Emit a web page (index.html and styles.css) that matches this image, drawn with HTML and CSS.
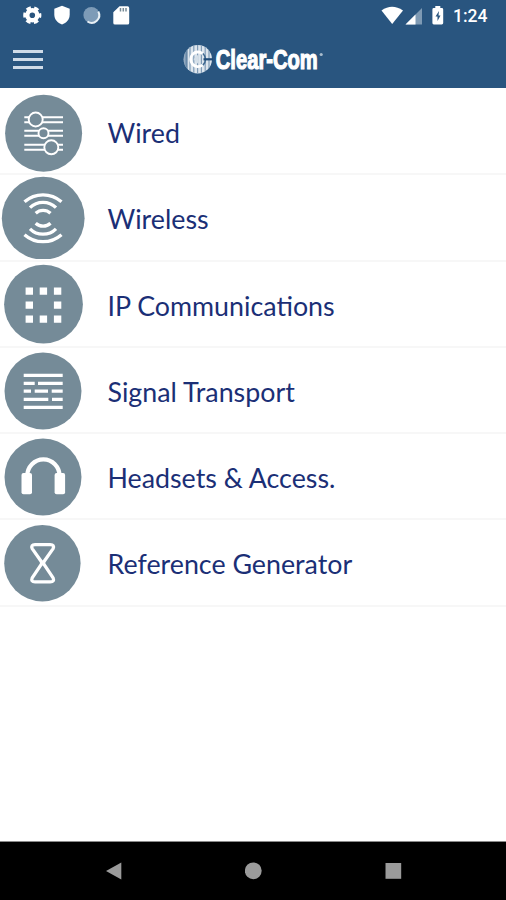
FILE: index.html
```html
<!DOCTYPE html>
<html lang="en" dir="ltr">
<head>
  <title>Clear-Com</title>
  <meta charset="utf-8">
  <link rel="stylesheet" href="styles.css">
</head>
<body>
  <header class="top">
    <div class="status">
      <svg class="status-left" width="140" height="32" viewBox="0 0 140 32">
        <circle cx="32.3" cy="15.2" r="5" fill="none" stroke="#fff" stroke-width="4.4"/>
        <circle cx="32.3" cy="15.2" r="7.6" fill="none" stroke="#fff" stroke-width="3" stroke-dasharray="4.6 3.36" stroke-dashoffset="2.3"/>
        <path d="M62 5.8l7.7 3v5.8c0 4.8-3.3 8.6-7.7 10-4.4-1.4-7.7-5.2-7.7-10V8.8z" fill="#fff"/>
        <circle cx="91.4" cy="15" r="8" fill="#7d9bb7"/>
        <path d="M98.3 11.5A7.6 7.6 0 0 1 87.5 21.5" fill="none" stroke="#e9f0f5" stroke-width="2"/>
        <path d="M119.500 6.200h8q1.700 0 1.700 1.700v15q0 1.700-1.700 1.700h-12.500q-1.700 0-1.700-1.700V12.200z" fill="#fff"/>
        <path d="M120.500 8v3.500M123.300 8v3.500M126 8v3.500" stroke="#778b96" stroke-width="1.500"/>
      </svg>
      <svg width="66" height="32" viewBox="380 0 66 32">
        <path d="M381.500 10.500Q392 3 403 10.500L392.200 24z" fill="#fff"/>
        <path d="M422 8v16.500h-16.500z" fill="#7e9ab4"/>
        <path d="M415.500 14.500v10h-10z" fill="#fff"/>
        <path d="M435.300 6h5v2h1.500q1.400 0 1.400 1.400v13.700q0 1.400-1.400 1.400h-8q-1.400 0-1.400-1.400V9.400q0-1.400 1.400-1.400h1.500z" fill="#fff"/>
        <path d="M439 11l-3.500 5.500h2v4.500l3-5.500h-2z" fill="#29557f"/>
      </svg>
      <span class="clock">1:24</span>
    </div>
    <div class="title-bar">
      <div class="menu">
        <span></span>
        <span></span>
        <span></span>
      </div>
      <div class="brand">
        <svg width="31" height="36" viewBox="0 0 31 36">
          <clipPath id="globe"><circle cx="14.8" cy="16.3" r="14.2"/></clipPath>
          <g clip-path="url(#globe)">
            <path d="M0 0h30v32H0z" fill="#dce5ed"/>
            <path d="M3.2 0v32M7 0v32M10.8 0v32M14.6 0v32M18.4 0v32M22.2 0v32M26 0v32" stroke="#7f9bb6" stroke-width="1.2"/>
            <path d="M0 0h5v32H0z" fill="#29557f" opacity=".4"/>
          </g>
          <path d="M19.5 10.6A7.3 7.3 0 1 0 19.5 22" fill="none" stroke="#fff" stroke-width="2.8"/>
          <path d="M15.500 11.300v10l-5-5z" fill="#d4dfe8"/>
          <path d="M20 10.500q2.500 2.500 2.500 5.800t-2.500 5.800" fill="none" stroke="#3f6990" stroke-width="1.500"/>
          <path d="M20.500 16.300H30" stroke="#1f4b78" stroke-width="2.200"/>
        </svg>
        <svg width="150" height="36" viewBox="0 0 150 36">
          <text class="wordmark" x="1.8" y="26" textLength="102" lengthAdjust="spacingAndGlyphs">Clear-Com</text>
          <circle cx="107.2" cy="11.5" r="1.6" fill="#a9bccd"/>
        </svg>
      </div>
    </div>
  </header>

  <main>
    <div class="row">
      <svg class="icon" viewBox="0 0 86 84">
        <circle class="disc" cx="43.6" cy="44.3" r="38.5"/>
        <g class="thin">
          <path d="M24.300 28.300H63M24.300 33.300H63M24.300 41.700H63M24.300 46.700H63M24.300 55.700H63M24.300 60.700H63"/>
          <circle class="disc" cx="35.7" cy="30.5" r="7"/>
          <circle class="disc" cx="43.5" cy="44.3" r="5"/>
          <circle class="disc" cx="51.3" cy="58.3" r="7"/>
        </g>
      </svg>
      <span>Wired</span>
    </div>
    <div class="row">
      <svg class="icon" viewBox="0 0 86 84">
        <circle class="disc" cx="43.2" cy="43.2" r="41.4"/>
        <g class="line">
          <path d="M24.500 26.800A28 28 0 0 1 61.500 26.800M30 32.700A18.400 18.400 0 0 1 56 32.700M35.700 38.200A10.900 10.900 0 0 1 50.500 38.200"/>
          <path d="M24.500 59.700A28 28 0 0 0 61.500 59.700M30 53.800A18.400 18.400 0 0 0 56 53.800M35.700 48.300A10.900 10.900 0 0 0 50.500 48.300"/>
        </g>
      </svg>
      <span>Wireless</span>
    </div>
    <div class="row">
      <svg class="icon" viewBox="0 0 86 84">
        <circle class="disc" cx="43.5" cy="42.2" r="39.4"/>
        <path fill="#fff" d="M25.600 25.500h7.400v7.200h-7.400zM39.700 25.500h7.400v7.200h-7.400zM53.900 25.500h7.400v7.200h-7.400zM25.600 39.500h7.400v7.200h-7.400zM53.900 39.500h7.400v7.200h-7.400zM25.600 53.500h7.400v7.200h-7.400zM39.700 53.500h7.400v7.200h-7.400zM53.900 53.500h7.400v7.200h-7.400z"/>
      </svg>
      <span>IP Communications</span>
    </div>
    <div class="row">
      <svg class="icon" viewBox="0 0 86 84">
        <circle class="disc" cx="43" cy="43" r="38.5"/>
        <path class="line" d="M23.700 27.300h39M23.700 35.300h11M38 35.300h24.700M23.700 43.100h7.300M34.700 43.100H48M51.700 43.100h11M23.700 51.300h24.600M52 51.300h10.700M23.700 59.300h39"/>
      </svg>
      <span>Signal Transport</span>
    </div>
    <div class="row">
      <svg class="icon" viewBox="0 0 86 84">
        <circle class="disc" cx="43" cy="43" r="38.5"/>
        <path d="M27.200 42A16.200 16.700 0 0 1 59.600 42" fill="none" stroke="#fff" stroke-width="4.200"/>
        <rect x="21.5" y="39" width="10.5" height="21.3" rx="2" fill="#fff"/>
        <rect x="54.6" y="39" width="10.5" height="21.3" rx="2" fill="#fff"/>
      </svg>
      <span>Headsets &amp; Access.</span>
    </div>
    <div class="row">
      <svg class="icon" viewBox="0 0 86 84">
        <circle class="disc" cx="42.4" cy="43.2" r="38.2"/>
        <path class="line" stroke-linejoin="round" d="M35 24.600h15.300q4.400 0 2.800 4L44.200 41.200q-1 1.700 0 3.400l8.900 13.300q1.600 4-2.800 4H35q-4.400 0-2.800-4L41.100 44.600q1-1.700 0-3.400L32.200 28.600q-1.600-4 2.800-4z"/>
      </svg>
      <span>Reference Generator</span>
    </div>
  </main>

  <footer class="nav">
    <svg width="18" height="18" viewBox="0 0 18 18"><path d="M1 9L16.300.5v17z"/></svg>
    <svg width="18" height="18" viewBox="0 0 18 18"><circle cx="8.3" cy="8.8" r="8.4"/></svg>
    <svg width="18" height="18" viewBox="0 0 18 18"><path d="M1.500 1h15.700v15.800H1.500z"/></svg>
  </footer>
</body>
</html>
```
FILE: styles.css
```css
html, body
{
  height: 100%;
}
body
{
  margin: 0;
  display: flex;
  flex-direction: column;
  background: #fff;
  font-family: Lato, "Liberation Sans", sans-serif;
}
svg
{
  display: block;
}
.top
{
  height: 88px;
  background: #29557f;
  color: #fff;
}
.status
{
  display: flex;
  height: 32px;
}
.status-left
{
  margin-right: 240px;
}
.clock
{
  margin-left: 7px;
  font: 500 17.5px/32px Roboto, sans-serif;
}
.title-bar
{
  display: grid;
  grid-template-columns: 183px auto;
  height: 56px;
}
.menu
{
  display: flex;
  flex-direction: column;
  gap: 5.5px;
  padding: 18px 0 0 13px;
}
.menu span
{
  width: 30px;
  height: 2.5px;
  background: #cfdbe8;
}
.brand
{
  display: flex;
  padding-top: 11px;
}
.wordmark
{
  font: bold 27px "Liberation Sans", sans-serif;
  fill: #fff;
  stroke: #fff;
  stroke-width: 1.2px;
}
main
{
  flex: 1;
  padding-top: 1px;
}
.row
{
  display: flex;
  align-items: center;
  box-sizing: border-box;
  height: 86.25px;
  border-bottom: 2px solid #f7f7f7;
  color: #1b2f76;
  font-size: 26.8px;
  white-space: nowrap;
}
.row span
{
  padding-top: 4px;
}
.icon
{
  width: 86px;
  height: 84px;
  margin-right: 21.5px;
}
.disc
{
  fill: #758b98;
}
.thin
{
  fill: none;
  stroke: #fff;
  stroke-width: 1.9px;
}
.line
{
  fill: none;
  stroke: #fff;
  stroke-width: 3.3px;
}
.nav
{
  display: flex;
  justify-content: space-between;
  align-items: center;
  box-sizing: border-box;
  height: 59px;
  padding: 0 104px 0 105px;
  border-top: 1px solid #8a8a8a;
  background: #000;
}
.nav svg
{
  fill: #9b9b9b;
}
```
